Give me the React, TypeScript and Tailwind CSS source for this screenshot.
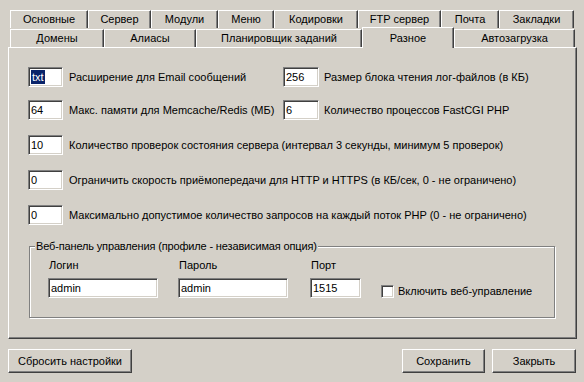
import type { ReactNode } from 'react';

const topTabs = [
  { label: 'Основные', w: 'w-[78px]' },
  { label: 'Сервер', w: 'w-[63px]' },
  { label: 'Модули', w: 'w-[67px]' },
  { label: 'Меню', w: 'w-[56px]' },
  { label: 'Кодировки', w: 'w-[84px]' },
  { label: 'FTP сервер', w: 'w-[83px]' },
  { label: 'Почта', w: 'w-[58px]' },
  { label: 'Закладки', w: 'w-[75px]' },
];

const frontTabs = [
  { label: 'Домены', w: 'w-[94px]' },
  { label: 'Алиасы', w: 'w-[92px]' },
  { label: 'Планировщик заданий', w: 'w-[166px]' },
  { label: 'Разное', w: 'w-[92px]', active: true },
  { label: 'Автозагрузка', w: 'w-[121px]' },
];

const Tab = ({ label, w, active }: { label: string; w: string; active?: boolean }) => {
  if (active) {
    return (
      <div
        className={`${w} relative z-10 -mt-[2px] -mb-px flex h-[21px] items-start justify-center border-l border-t border-white bg-[#d4d0c8] pt-[2px] shadow-[inset_-1px_0_0_#808080] border-r border-r-[#404040]`}
      >
        {label}
      </div>
    );
  }
  return (
    <div
      className={`${w} flex h-[18px] items-center justify-center border-l border-t border-white border-r border-r-[#404040] shadow-[inset_-1px_0_0_#808080]`}
    >
      {label}
    </div>
  );
};

const Field = ({ value, w, selected }: { value: string; w: string; selected?: boolean }) => (
  <div
    className={`${w} flex h-[20px] shrink-0 items-center border border-t-[#808080] border-l-[#808080] border-b-white border-r-white bg-white pl-[1px] shadow-[inset_1px_1px_0_#404040,inset_-1px_-1px_0_#d4d0c8]`}
  >
    {selected ? <span className="ml-px bg-[#0a246a] px-px leading-[14px] text-white">{value}</span> : <span className="ml-px">{value}</span>}
  </div>
);

const Row = ({ children, className = '' }: { children: ReactNode; className?: string }) => (
  <div className={`flex h-[20px] items-center ${className}`}>{children}</div>
);

const Button = ({ children, w }: { children: ReactNode; w: string }) => (
  <button
    type="button"
    className={`${w} h-[24px] border border-t-white border-l-white border-b-[#404040] border-r-[#404040] bg-[#d4d0c8] shadow-[inset_-1px_-1px_0_#808080]`}
  >
    {children}
  </button>
);

export default function App() {
  return (
    <div
      className="h-[382px] w-[584px] overflow-hidden bg-[#d4d0c8] text-[11px] text-black"
      style={{ fontFamily: '"Liberation Sans", Arial, sans-serif' }}
    >
      {/* Tabs */}
      <div className="pt-[10px] pl-[10px]">
        <div className="flex">
          {topTabs.map((t) => (
            <Tab key={t.label} {...t} />
          ))}
        </div>
        <div className="mt-px flex">
          {frontTabs.map((t) => (
            <Tab key={t.label} {...t} />
          ))}
        </div>
      </div>

      {/* Panel */}
      <div className="ml-[8px] h-[292px] w-[569px] border border-t-white border-l-white border-b-[#404040] border-r-[#404040] shadow-[inset_-1px_-1px_0_#808080]">
        <div className="pl-[19px] pt-[19px]">
          <Row>
            <div className="flex w-[255px] items-center">
              <Field value="txt" w="w-[35px]" selected />
              <span className="ml-[6px]">Расширение для Email сообщений</span>
            </div>
            <Field value="256" w="w-[36px]" />
            <span className="ml-[5px]">Размер блока чтения лог-файлов (в КБ)</span>
          </Row>
          <Row className="mt-[13px]">
            <div className="flex w-[255px] items-center">
              <Field value="64" w="w-[35px]" />
              <span className="ml-[6px]">Макс. памяти для Memcache/Redis (МБ)</span>
            </div>
            <Field value="6" w="w-[36px]" />
            <span className="ml-[5px]">Количество процессов FastCGI PHP</span>
          </Row>
          <Row className="mt-[15px]">
            <Field value="10" w="w-[35px]" />
            <span className="ml-[6px]">Количество проверок состояния сервера (интервал 3 секунды, минимум 5 проверок)</span>
          </Row>
          <Row className="mt-[15px]">
            <Field value="0" w="w-[35px]" />
            <span className="ml-[6px]">Ограничить скорость приёмопередачи для HTTP и HTTPS (в КБ/сек, 0 - не ограничено)</span>
          </Row>
          <Row className="mt-[15px]">
            <Field value="0" w="w-[35px]" />
            <span className="ml-[6px]">Максимально допустимое количество запросов на каждый поток PHP (0 - не ограничено)</span>
          </Row>

          {/* Web panel group */}
          <fieldset className="mt-[15px] ml-px h-[78px] w-[526px] border border-[#808080] shadow-[1px_1px_0_#ffffff,inset_1px_1px_0_#ffffff]">
            <legend className="ml-[5px] bg-[#d4d0c8] px-px leading-[13px] tracking-[-0.15px]">
              Веб-панель управления (профиле - независимая опция)
            </legend>
            <div className="flex pl-[18px] pt-[6px]">
              <div className="flex w-[130px] flex-col">
                <span className="pl-px leading-[13px]">Логин</span>
                <div className="mt-[6px]">
                  <Field value="admin" w="w-[110px]" />
                </div>
              </div>
              <div className="flex w-[132px] flex-col">
                <span className="pl-px leading-[13px]">Пароль</span>
                <div className="mt-[6px]">
                  <Field value="admin" w="w-[110px]" />
                </div>
              </div>
              <div className="flex w-[71px] flex-col">
                <span className="pl-px leading-[13px]">Порт</span>
                <div className="mt-[6px]">
                  <Field value="1515" w="w-[51px]" />
                </div>
              </div>
              <div className="mt-[24px] flex h-[16px] items-center">
                <div className="h-[13px] w-[13px] border border-t-[#808080] border-l-[#808080] border-b-white border-r-white bg-white shadow-[inset_1px_1px_0_#404040,inset_-1px_-1px_0_#d4d0c8]" />
                <span className="ml-[4px]">Включить веб-управление</span>
              </div>
            </div>
          </fieldset>
        </div>
      </div>

      {/* Buttons */}
      <div className="mt-[10px] flex pl-[8px]">
        <Button w="w-[124px]">Сбросить настройки</Button>
        <div className="ml-auto flex gap-[7px] pr-[8px]">
          <Button w="w-[83px]">Сохранить</Button>
          <Button w="w-[84px]">Закрыть</Button>
        </div>
      </div>
    </div>
  );
}
